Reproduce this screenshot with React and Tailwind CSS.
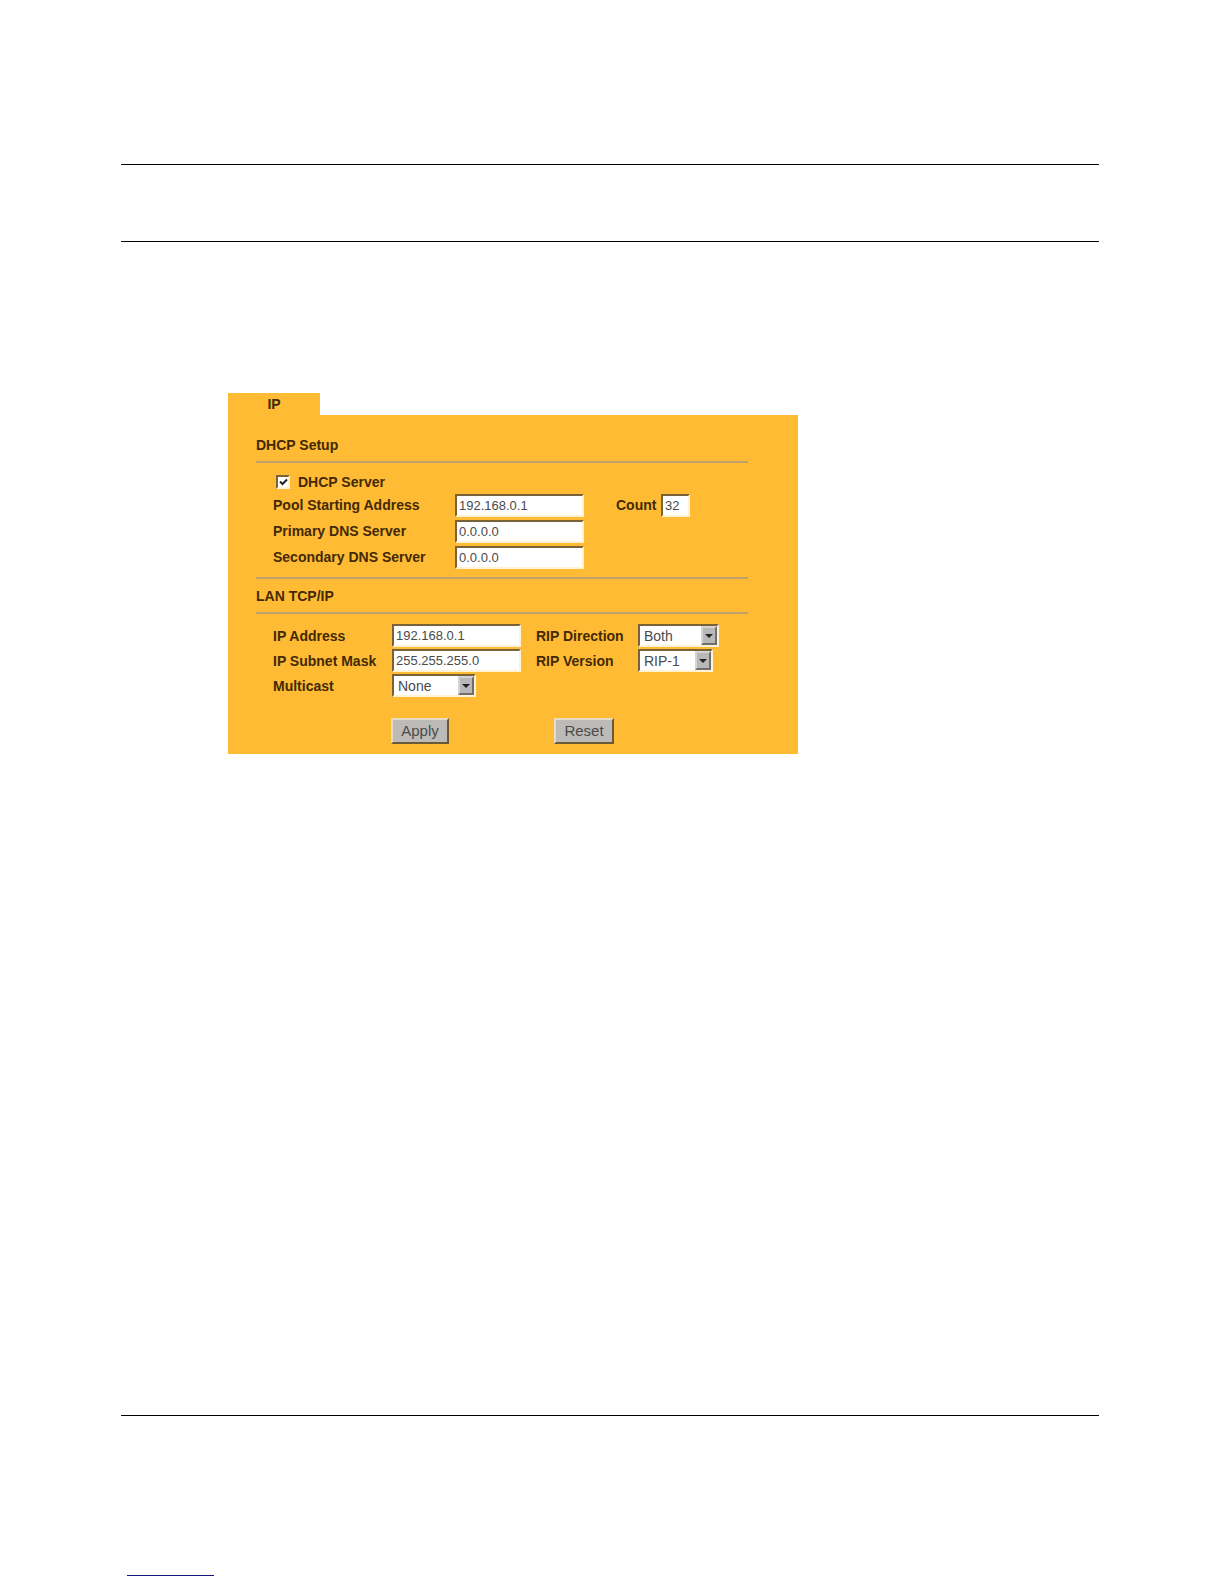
const RULE = "h-0.5 border-0 bg-[#bda06a]";
const FIELD =
  "h-[23px] border-2 border-t-[#7a6238] border-l-[#7a6238] border-r-[#fff3d6] border-b-[#fff3d6] bg-white text-[#4a4a4a] outline-none";
const BUTTON =
  "h-[26px] border-2 border-t-[#e6dcc4] border-l-[#e6dcc4] border-r-[#6b5a38] border-b-[#6b5a38] bg-[#bdbbb8] text-[15px] leading-5 text-[#4a4a4a]";

function Label({ htmlFor, children }) {
  return (
    <label htmlFor={htmlFor} className="text-sm font-bold whitespace-nowrap text-[#432a06]">
      {children}
    </label>
  );
}

function TextField({ id, value, className = "w-[129px]" }) {
  return (
    <input id={id} type="text" defaultValue={value} className={`${FIELD} ${className} pl-0.5 text-[13px]`} />
  );
}

function SelectField({ id, options, className }) {
  return (
    <div className={`relative ${className}`}>
      <select id={id} className={`${FIELD} block w-full appearance-none pl-1 text-sm leading-4`}>
        {options.map((option) => (
          <option key={option}>{option}</option>
        ))}
      </select>
      <span className="pointer-events-none absolute top-0.5 right-0.5 bottom-0.5 flex w-4 items-center justify-center border-2 border-t-[#d4d4d4] border-l-[#d4d4d4] border-r-[#6e6e6e] border-b-[#6e6e6e] bg-[#b8b8b8]">
        <svg viewBox="0 0 8 4" className="h-1 w-2" aria-hidden="true">
          <path d="M0 0h8L4 4z" fill="#222" />
        </svg>
      </span>
    </div>
  );
}

function Heading({ children }) {
  return <h2 className="mb-1.5 text-sm leading-5 font-bold text-[#432a06]">{children}</h2>;
}

export default function App() {
  return (
    <div
      className="flex min-h-screen flex-col bg-white pt-[164px] pr-[125px] pb-2 pl-[121px]"
      style={{ fontFamily: '"Liberation Sans", Arial, sans-serif' }}
    >
      <header className="flex h-[78px] flex-col justify-between">
        <hr className="border-t border-black" />
        <hr className="border-t border-black" />
      </header>

      <main className="mt-[151px] ml-[107px] w-full max-w-[570px]">
        <div role="tablist" className="flex">
          <button
            type="button"
            role="tab"
            aria-selected="true"
            className="h-[22px] w-[92px] bg-[#ffbb33] text-sm leading-[22px] font-bold text-[#432a06]"
          >
            IP
          </button>
        </div>
        <form className="bg-[#ffbb33] pt-5 pr-[50px] pb-2.5 pl-7" onSubmit={(e) => e.preventDefault()}>
          <section>
            <Heading>DHCP Setup</Heading>
            <hr className={RULE} />
            <div className="mt-[9px] flex h-5 items-center gap-2 pl-5">
              <span className="relative flex">
                <input
                  id="dhcp-server"
                  type="checkbox"
                  defaultChecked
                  className="peer size-3.5 appearance-none border-2 border-t-[#7a6238] border-l-[#7a6238] border-r-[#fff3d6] border-b-[#fff3d6] bg-white"
                />
                <svg
                  viewBox="0 0 14 14"
                  className="pointer-events-none absolute inset-0 hidden size-3.5 peer-checked:block"
                  aria-hidden="true"
                >
                  <path d="M4 6.5l2.5 2.5L11 4.5" fill="none" stroke="#222" strokeWidth="2" />
                </svg>
              </span>
              <Label htmlFor="dhcp-server">DHCP Server</Label>
            </div>
            <div className="mt-px grid auto-rows-[24px] grid-cols-[182px_161px_45px_auto] items-center justify-start gap-y-0.5 pl-[17px]">
              <Label htmlFor="pool">Pool Starting Address</Label>
              <TextField id="pool" value="192.168.0.1" />
              <Label htmlFor="count">Count</Label>
              <TextField id="count" value="32" className="w-[29px]" />
              <Label htmlFor="dns1">Primary DNS Server</Label>
              <TextField id="dns1" value="0.0.0.0" className="col-span-3 w-[129px]" />
              <Label htmlFor="dns2">Secondary DNS Server</Label>
              <TextField id="dns2" value="0.0.0.0" className="col-span-3 w-[129px]" />
            </div>
          </section>

          <section className="mt-2">
            <hr className={`${RULE} mb-[7px]`} />
            <Heading>LAN TCP/IP</Heading>
            <hr className={RULE} />
            <div className="mt-2.5 grid auto-rows-[23px] grid-cols-[119px_144px_102px_auto] items-center justify-start gap-y-0.5 pl-[17px]">
              <Label htmlFor="ip">IP Address</Label>
              <TextField id="ip" value="192.168.0.1" />
              <Label htmlFor="rip-direction">RIP Direction</Label>
              <SelectField id="rip-direction" options={["Both", "In Only", "Out Only", "None"]} className="w-[81px]" />
              <Label htmlFor="mask">IP Subnet Mask</Label>
              <TextField id="mask" value="255.255.255.0" />
              <Label htmlFor="rip-version">RIP Version</Label>
              <SelectField id="rip-version" options={["RIP-1", "RIP-2B", "RIP-2M"]} className="w-[75px]" />
              <Label htmlFor="multicast">Multicast</Label>
              <SelectField id="multicast" options={["None", "IGMP-v1", "IGMP-v2"]} className="w-[84px]" />
            </div>
          </section>

          <div className="mt-[21px] flex gap-[105px] pl-[135px]">
            <button type="submit" className={`${BUTTON} w-[58px]`}>
              Apply
            </button>
            <button type="reset" className={`${BUTTON} w-[60px]`}>
              Reset
            </button>
          </div>
        </form>
      </main>

      <footer className="mt-auto flex h-[161px] flex-col justify-between">
        <hr className="border-t border-black" />
        <hr className="ml-1.5 h-px w-[87px] border-0 bg-[#14147a]" />
      </footer>
    </div>
  );
}
